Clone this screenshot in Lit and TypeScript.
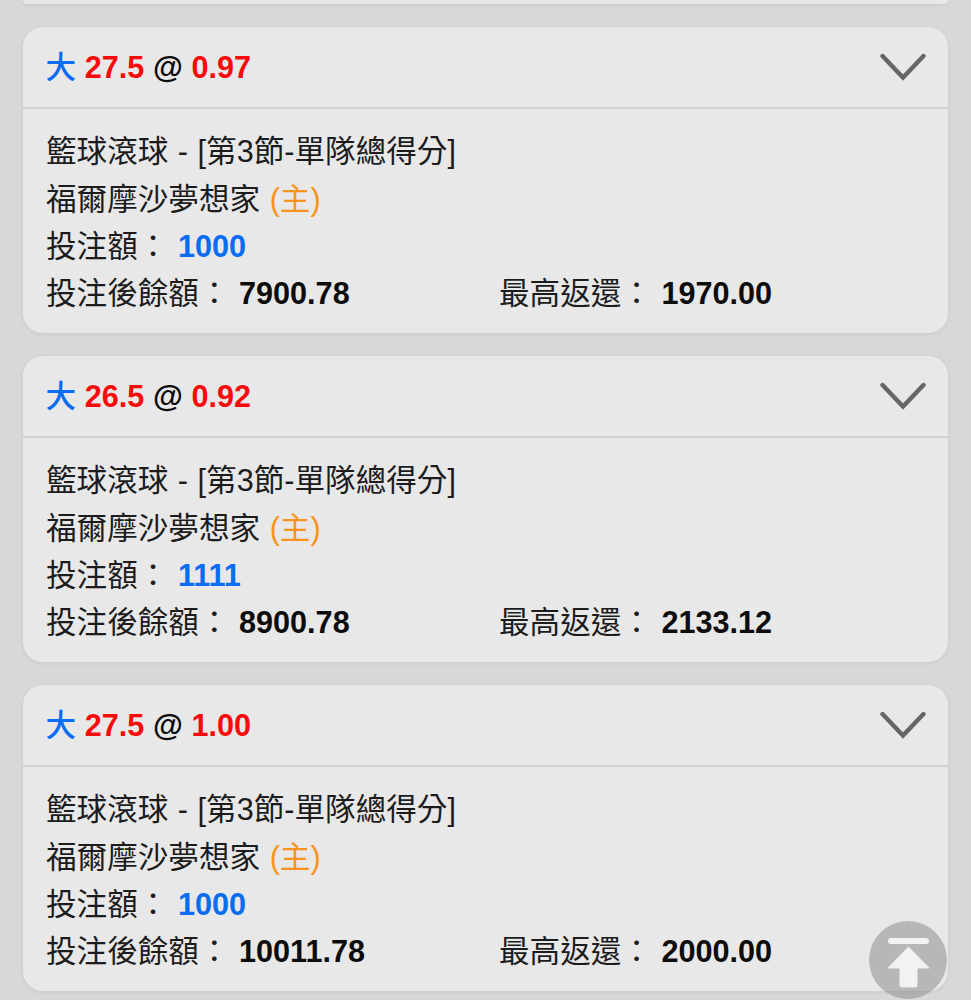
import { LitElement, html, css } from "lit";
import { customElement } from "lit/decorators.js";

interface Bet { line: string; odds: string; stake: string; after: string; ret: string; }

const BETS: Bet[] = [
  { line: "27.5", odds: "0.97", stake: "1000", after: "7900.78", ret: "1970.00" },
  { line: "26.5", odds: "0.92", stake: "1111", after: "8900.78", ret: "2133.12" },
  { line: "27.5", odds: "1.00", stake: "1000", after: "10011.78", ret: "2000.00" },
];

@customElement("app-root")
export class AppRoot extends LitElement {
  static styles = css`
    :host {
      display: block;
      position: relative;
      height: 1000px;
      overflow: hidden;
      background: #d8d8d8;
      font-family: "Liberation Sans", "Noto Sans CJK TC", sans-serif;
      font-size: 30.6px;
      color: #1c1c1c;
    }
    .list {
      display: flex;
      flex-direction: column;
      gap: 23px;
      padding: 0 23px;
    }
    .stub {
      height: 4px;
      background: #e8e8e8;
      border-radius: 0 0 20px 20px;
      box-shadow: 0 1px 4px rgba(0, 0, 0, 0.08);
    }
    .card {
      height: 306px;
      box-sizing: border-box;
      background: #e8e8e8;
      border-radius: 20px;
      box-shadow: 0 1px 4px rgba(0, 0, 0, 0.08);
    }
    .head {
      height: 82px;
      box-sizing: border-box;
      border-bottom: 2px solid #d0d0d0;
      padding: 0 22px 0 22.5px;
      display: flex;
      align-items: center;
      justify-content: space-between;
    }
    .title {
      font-weight: 700;
      color: #0c0c0c;
      white-space: pre;
      line-height: 78px;
      word-spacing: 0.2px;
    }
    .big { font-weight: 500; color: #0a6cf0; }
    .red { color: #f80a0a; }
    .chev { width: 46px; height: 30px; display: block; }
    .body {
      padding: 18px 23px 0;
      display: flex;
      flex-direction: column;
      word-spacing: 1px;
    }
    .row { height: 47.5px; line-height: 48.5px; white-space: pre; }
    .home { color: #f7931e; }
    .stake { color: #0a6cf0; font-weight: 700; }
    .num { color: #0c0c0c; font-weight: 700; }
    .cols { display: grid; grid-template-columns: 453px 1fr; line-height: 47.5px; }
    .top {
      position: absolute;
      left: 869px;
      top: 921px;
      width: 78px;
      height: 78px;
      border-radius: 50%;
      background: rgba(150, 150, 150, 0.6);
    }
    .top svg { display: block; width: 78px; height: 78px; }
  `;

  private card(b: Bet) {
    return html`
      <div class="card">
        <div class="head">
          <div class="title"><span class="big">大</span> <span class="red">${b.line}</span> @ <span class="red">${b.odds}</span></div>
          <svg class="chev" viewBox="0 0 46 30" fill="none" stroke="#666" stroke-width="4.4" stroke-linecap="round" stroke-linejoin="miter">
            <path d="M2.5 4 L23 25.5 L43.5 4" />
          </svg>
        </div>
        <div class="body">
          <div class="row">籃球滾球 - [第3節-單隊總得分]</div>
          <div class="row">福爾摩沙夢想家 <span class="home">(主)</span></div>
          <div class="row">投注額： <span class="stake">${b.stake}</span></div>
          <div class="row cols">
            <div>投注後餘額： <span class="num">${b.after}</span></div>
            <div>最高返還： <span class="num">${b.ret}</span></div>
          </div>
        </div>
      </div>
    `;
  }

  render() {
    return html`
      <div class="list">
        <div class="stub"></div>
        ${BETS.map((b) => this.card(b))}
      </div>
      <div class="top">
        <svg viewBox="0 0 78 78" fill="#f2f2f2">
          <rect x="19" y="17" width="41" height="6" rx="3" />
          <path d="M39.5 26 L60 47 H48 V64.5 Q48 66 46.5 66 H32.5 Q31 66 31 64.5 V47 H19 Z" stroke="#f2f2f2" stroke-linejoin="round" />
        </svg>
      </div>
    `;
  }
}
